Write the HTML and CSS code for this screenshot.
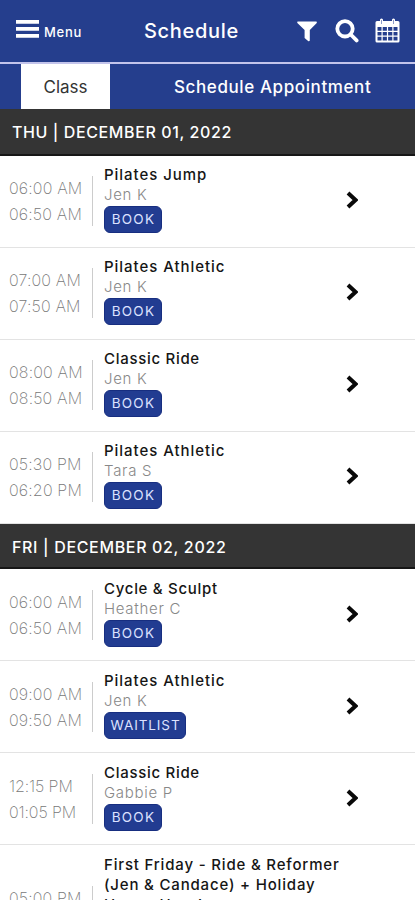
FILE: index.html
```html
<!DOCTYPE html>
<html lang="en">
<head>
<meta charset="utf-8">
<title>Schedule</title>
<link rel="stylesheet" href="styles.css">
</head>
<body>
<header class="topbar">
  <div class="menu">
    <svg class="burger" viewBox="0 0 22 19"><path d="M0 1h22v3.500H0zM0 7.700h22v3.500H0zM0 14.400h22v3.500H0z"/></svg>
    <span>Menu</span>
  </div>
  <h1>Schedule</h1>
  <div class="actions">
    <svg class="filter" viewBox="0 0 20 21"><path d="M.8.5h18.400q1.200.5.3 1.700L12.800 9v10.600q-.5 1.200-1.700.5L7.600 17V9L.6 2.200Q-.3 1 .8.5z"/></svg>
    <svg class="search" viewBox="0 0 24 24"><circle cx="10" cy="9.800" r="7.700"/><path d="M15.700 15.500l5.900 5.900"/></svg>
    <svg class="calendar" viewBox="0 0 25 25"><path fill-rule="evenodd" d="M2 3h3V1.500Q6.500-.5 8 1.500V3h9V1.500Q18.500-.5 20 1.500V3h3q1.500 0 1.500 1.500V23q0 1.500-1.500 1.500H2Q.5 24.500.5 23V4.500Q.5 3 2 3zM2.500 9v3.700h4V9zm5.200 0v3.700h4.200V9zm5.400 0v3.700h4.200V9zm5.400 0v3.700h4V9zM2.500 13.900v3.700h4v-3.700zm5.200 0v3.700h4.200v-3.700zm5.400 0v3.700h4.200v-3.700zm5.400 0v3.700h4v-3.700zM2.500 18.800v3.700h4v-3.700zm5.200 0v3.700h4.200v-3.700zm5.400 0v3.700h4.200v-3.700zm5.400 0v3.700h4v-3.700z"/><path class="ring" d="M6.500 2v4M18.500 2v4"/></svg>
  </div>
</header>
<nav class="tabs">
  <span class="tab active">Class</span>
  <span class="tab appointment">Schedule Appointment</span>
</nav>
<main>
  <section class="thursday">
  <h2>THU | DECEMBER 01, 2022</h2>
  <article class="row"><div class="time">06:00 AM<br>06:50 AM</div><div class="info"><h3>Pilates Jump</h3><p>Jen K</p><button>BOOK</button></div><svg class="chevron" viewBox="0 0 12 18"><path d="M2 2l7.500 7L2 16"/></svg></article>
  <article class="row"><div class="time">07:00 AM<br>07:50 AM</div><div class="info"><h3>Pilates Athletic</h3><p>Jen K</p><button>BOOK</button></div><svg class="chevron" viewBox="0 0 12 18"><path d="M2 2l7.500 7L2 16"/></svg></article>
  <article class="row"><div class="time">08:00 AM<br>08:50 AM</div><div class="info"><h3 class="compact">Classic Ride</h3><p>Jen K</p><button>BOOK</button></div><svg class="chevron" viewBox="0 0 12 18"><path d="M2 2l7.500 7L2 16"/></svg></article>
  <article class="row"><div class="time">05:30 PM<br>06:20 PM</div><div class="info"><h3>Pilates Athletic</h3><p>Tara S</p><button>BOOK</button></div><svg class="chevron" viewBox="0 0 12 18"><path d="M2 2l7.500 7L2 16"/></svg></article>
  </section>
  <section class="friday">
  <h2>FRI | DECEMBER 02, 2022</h2>
  <article class="row"><div class="time">06:00 AM<br>06:50 AM</div><div class="info"><h3 class="compact">Cycle &amp; Sculpt</h3><p>Heather C</p><button>BOOK</button></div><svg class="chevron" viewBox="0 0 12 18"><path d="M2 2l7.500 7L2 16"/></svg></article>
  <article class="row"><div class="time">09:00 AM<br>09:50 AM</div><div class="info"><h3>Pilates Athletic</h3><p>Jen K</p><button class="waitlist">WAITLIST</button></div><svg class="chevron" viewBox="0 0 12 18"><path d="M2 2l7.500 7L2 16"/></svg></article>
  <article class="row"><div class="time narrow">12:15 PM<br>01:05 PM</div><div class="info"><h3 class="compact">Classic Ride</h3><p>Gabbie P</p><button>BOOK</button></div><svg class="chevron" viewBox="0 0 12 18"><path d="M2 2l7.500 7L2 16"/></svg></article>
  <article class="row tall"><div class="time">05:00 PM<br>06:00 PM</div><div class="info"><h3>First Friday - Ride &amp; Reformer<br>(Jen &amp; Candace) + Holiday<br>Happy Hour!</h3></div></article>
  </section>
</main>
</body>
</html>
```

FILE: styles.css
```css
* { box-sizing: border-box; }
body { margin: 0; height: 900px; overflow: hidden; background: #fff; font-family: Inter, "Liberation Sans", sans-serif; }
h1, h2, h3, p { margin: 0; font-weight: 500; }
svg { display: block; fill: #fff; }
.topbar { height: 64px; background: #253e8d; border-bottom: 2px solid #c3c4eb; color: #fff; display: grid; grid-template-columns: 144px 1fr 118px; align-items: center; }
.menu { display: flex; align-items: center; gap: 5px; padding-left: 16px; font-size: 13px; font-weight: 500; letter-spacing: .7px; }
.menu span { padding-top: 1px; }
.burger { width: 23px; height: 20px; margin-top: -4px; }
h1 { font-size: 20px; line-height: 26px; letter-spacing: .7px; margin-top: -1px; }
.actions { display: flex; align-items: center; }
.filter { width: 20px; height: 21px; }
.search { width: 24px; height: 24px; margin-left: 18px; }
.search * { fill: none; stroke: #fff; stroke-width: 3.8; stroke-linecap: round; }
.calendar { width: 25px; height: 25px; margin-left: 16px; margin-top: -1px; }
.ring { stroke: #8d9bc8; stroke-width: 1; }
.tabs { height: 45px; background: #253e8d; display: flex; color: #fff; font-size: 17px; font-weight: 500; line-height: 46px; }
.active { margin-left: 21px; width: 89px; background: #fff; color: #333; text-align: center; font-weight: 400; }
.appointment { margin-left: 64px; letter-spacing: .6px; }
h2 { padding-left: 12px; background: #343434; color: #fff; border-bottom: 2px solid #161616; font-size: 16px; line-height: 46px; letter-spacing: .6px; }
.thursday h2 { height: 47px; }
.friday h2 { height: 45px; letter-spacing: .66px; }
.row { height: 92px; display: grid; grid-template-columns: 93px 1fr 12px; border-bottom: 1px solid #e3e3e3; align-items: start; padding-right: 57px; }
.time { height: 50px; margin-top: 21px; padding-left: 9px; border-right: 1px solid #ccc; color: #777; font-size: 16px; font-weight: 200; line-height: 25.5px; letter-spacing: .15px; white-space: nowrap; }
.narrow { letter-spacing: -.1px; }
.info { padding: 10px 0 0 11px; white-space: nowrap; }
h3 { color: #151515; font-size: 15px; line-height: 20px; letter-spacing: .95px; }
.compact { letter-spacing: .7px; }
p { color: #888; font-size: 15px; line-height: 20px; font-weight: 300; letter-spacing: .7px; }
button { display: block; width: 58px; height: 27px; margin-top: 1px; padding: 0 0 0 1px; border: 1px solid #172e80; border-radius: 6px; background: #223c91; color: #dce2ff; font: 400 13.5px/25px Inter, sans-serif; letter-spacing: 1.2px; }
.waitlist { width: 82px; letter-spacing: .9px; }
.chevron { width: 12px; height: 18px; margin-top: 36px; }
.chevron path { fill: none; stroke: #090909; stroke-width: 4; }
.thursday .time { margin-top: 20px; }
.thursday .info { padding-top: 9px; }
.thursday .chevron { margin-top: 35px; }
.tall { height: 133px; }
.tall .time { margin-top: 41px; }
.tall h3 { letter-spacing: .82px; }
```
